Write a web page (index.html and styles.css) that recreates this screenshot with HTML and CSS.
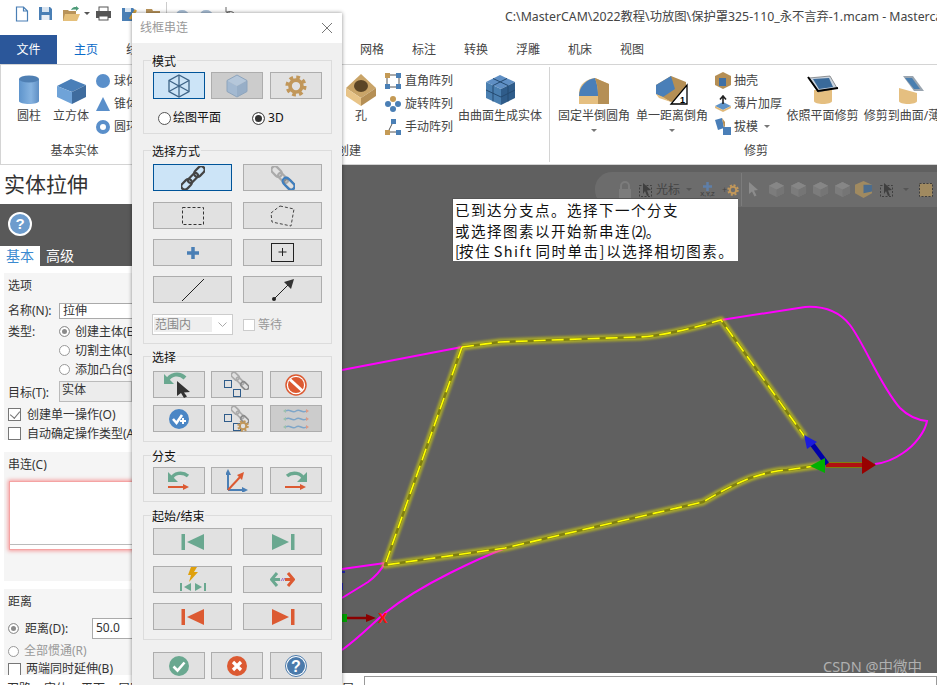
FILE: index.html
```html
<!DOCTYPE html>
<html lang="zh-CN">
<head>
    <meta charset="UTF-8">
    <title>实体拉伸 - Mastercam</title>
    <link rel="stylesheet" href="styles.css">
</head>
<body>
<svg class="defs">
    <symbol id="link-dark" viewBox="0 0 24 24"><g transform="rotate(-45 12 12)" fill="none" stroke="#444" stroke-width="2.2"><rect x="-3" y="8.5" width="12" height="7" rx="3.5"/><rect x="6" y="9.5" width="12" height="5" rx="2.5"/><rect x="15" y="8.5" width="12" height="7" rx="3.5"/></g></symbol>
    <symbol id="link-grey" viewBox="0 0 24 24"><g transform="rotate(45 12 12)" fill="none" stroke-width="2.2"><rect x="-3" y="8.5" width="12" height="7" rx="3.5" stroke="#aaa"/><rect x="6" y="9.5" width="12" height="5" rx="2.5" stroke="#aaa"/><rect x="15" y="8.5" width="12" height="7" rx="3.5" stroke="#8a8a8a"/></g></symbol>
    <symbol id="gear" viewBox="0 0 24 24"><circle cx="12" cy="12" r="6.5" fill="none" stroke="#c1975a" stroke-width="4"/><circle cx="12" cy="12" r="9.5" fill="none" stroke="#c1975a" stroke-width="4" stroke-dasharray="4 3.46"/></symbol>
    <symbol id="cube-dim" viewBox="0 0 18 18"><polygon points="9,1 17,5 17,13 9,17 1,13 1,5" fill="#7c7c7c"/><polygon points="9,9 17,5 17,13 9,17" fill="#757575"/><polygon points="9,1 17,5 9,9 1,5" fill="#868686"/></symbol>
    <symbol id="tri-end" viewBox="0 0 26 18"><rect x="21" y="1" width="3.5" height="16"/><polygon points="2,1 19,9 2,17"/></symbol>
    <symbol id="tri-start" viewBox="0 0 26 18"><rect x="1.5" y="1" width="3.5" height="16"/><polygon points="24,1 7,9 24,17"/></symbol>
</svg>

<div class="app">
    <div class="titlebar">
        <div class="qat">
            <svg class="qat-icon" width="14" height="16" viewBox="0 0 14 16"><path d="M1.5 1h7l4 4v10h-11z M8.5 1v4h4" fill="#fff" stroke="#4a7fb5" stroke-width="1.2"/></svg>
            <svg class="qat-icon" width="15" height="15" viewBox="0 0 15 15"><path d="M1 1h11l2 2v11H1z" fill="#4a7fb5"/><rect x="4" y="1" width="7" height="5" fill="#d8e4f0"/><rect x="3.5" y="9" width="8" height="5" fill="#e8eef5"/></svg>
            <svg class="qat-icon" width="18" height="16" viewBox="0 0 18 16"><path d="M1 4h5l1 1h7v10H1z" fill="#b8935a"/><path d="M3 8h15l-3 7H1z" fill="#e5c07b"/><path d="M9 4c1-2.500 3-3 5-3V0l3 2.500L14 5V3.500c-2 0-3 0-5 .5z" fill="#4c9a78"/></svg>
            <span class="qat-caret"></span>
            <svg class="qat-icon" width="17" height="15" viewBox="0 0 17 15"><rect x="4" y="1" width="9" height="5" fill="#fff" stroke="#555"/><rect x="1" y="5" width="15" height="7" fill="#555"/><rect x="4" y="10" width="9" height="4" fill="#fff" stroke="#555"/></svg>
            <svg class="qat-icon" width="16" height="16" viewBox="0 0 16 16"><path d="M1 2h11l2 2v11H1z" fill="#4a7fb5"/><rect x="4" y="2" width="6" height="4" fill="#d8e4f0"/><path d="M9 13l6-9" stroke="#d9a43c" stroke-width="2.500"/></svg>
            <svg class="qat-icon" width="14" height="14" viewBox="0 0 14 14"><path d="M0 2h6l1 2h7v10H0z" fill="#b8935a"/></svg>
            <i class="qat-sep"></i>
            <svg class="qat-icon" width="15" height="14" viewBox="0 0 15 14"><path d="M2 9C3 3 11 3 13 9" fill="none" stroke="#a9bfd6" stroke-width="3"/></svg>
            <svg class="qat-icon" width="15" height="14" viewBox="0 0 15 14"><path d="M2 9C3 3 11 3 13 9" fill="none" stroke="#a9bfd6" stroke-width="3"/></svg>
            <svg class="qat-icon" width="15" height="14" viewBox="0 0 15 14"><path d="M2 9C3 3 11 3 13 9M3 0v5h4" fill="none" stroke="#666"/></svg>
            <i class="qat-dash"></i>
        </div>
        <div class="doc-title">C:\MasterCAM\2022教程\功放图\保护罩325-110_永不言弃-1.mcam - Mastercam 2022</div>
    </div>

    <div class="tabs">
        <div class="tab-file">文件</div>
        <div class="tab active">主页</div>
        <div class="tab">线框</div>
        <div class="tab">曲面</div>
        <div class="tab">实体</div>
        <div class="tab tab-wide">模型准备</div>
        <div class="tab">网格</div>
        <div class="tab">标注</div>
        <div class="tab">转换</div>
        <div class="tab">浮雕</div>
        <div class="tab">机床</div>
        <div class="tab">视图</div>
    </div>

    <div class="ribbon">
        <div class="rgroup rgroup-basic">
            <div class="ritems">
                <div class="tool tool-cyl">
                    <svg width="22" height="30" viewBox="0 0 22 30"><defs><linearGradient id="cyl" x1="0" x2="1"><stop offset="0" stop-color="#5e94cc"/><stop offset=".6" stop-color="#86b3e0"/><stop offset="1" stop-color="#5f8fc4"/></linearGradient></defs><path d="M1 4v22c0 4 20 4 20 0V4z" fill="url(#cyl)"/><ellipse cx="11" cy="4" rx="10" ry="3.500" fill="#4f7fb3"/></svg>
                    <span>圆柱</span>
                </div>
                <div class="tool tool-cube">
                    <svg width="31" height="27" viewBox="0 0 31 27"><polygon points="15,1 30,7 16,14 1,8" fill="#4a7fb8"/><polygon points="1,8 16,14 16,26 1,19" fill="#6fa3d8"/><polygon points="16,14 30,7 30,19 16,26" fill="#3f6c9e"/></svg>
                    <span>立方体</span>
                </div>
                <div class="tool-list tool-list-basic">
                    <div class="tool-row"><svg width="14" height="14" viewBox="0 0 14 14"><circle cx="7" cy="7" r="7" fill="#5a8fca"/></svg><span>球体</span></div>
                    <div class="tool-row"><svg width="14" height="14" viewBox="0 0 14 14"><polygon points="7,0 14,14 0,14" fill="#5a8fca"/></svg><span>锥体</span></div>
                    <div class="tool-row"><svg width="14" height="14" viewBox="0 0 14 14"><circle cx="7" cy="7" r="5" fill="none" stroke="#5a8fca" stroke-width="4"/></svg><span>圆环</span></div>
                </div>
            </div>
            <div class="rlabel">基本实体</div>
        </div>

        <div class="rgroup rgroup-create">
            <div class="ritems">
                <div class="tool tool-hole">
                    <svg width="30" height="32" viewBox="0 0 30 32"><polygon points="15,0 30,14 15,24 0,14" fill="#c9a468"/><polygon points="0,14 15,24 15,32 0,22" fill="#e8c488"/><polygon points="30,14 15,24 15,32 30,22" fill="#b58f55"/><ellipse cx="15" cy="12" rx="7" ry="6" fill="#5b4526"/></svg>
                    <span>孔</span>
                </div>
                <div class="tool-list tool-list-array">
                    <div class="tool-row"><svg width="16" height="16" viewBox="0 0 16 16"><rect x="2" y="2" width="12" height="12" fill="none" stroke="#555"/><rect width="5" height="5" fill="#c49a55"/><rect x="11" width="5" height="5" fill="#4a7fb5"/><rect y="11" width="5" height="5" fill="#4a7fb5"/><rect x="11" y="11" width="5" height="5" fill="#4a7fb5"/></svg><span>直角阵列</span></div>
                    <div class="tool-row"><svg width="16" height="16" viewBox="0 0 16 16"><circle cx="8" cy="3" r="3" fill="#c49a55"/><circle cx="13" cy="8" r="3" fill="#4a7fb5"/><circle cx="8" cy="13" r="3" fill="#4a7fb5"/><circle cx="3" cy="8" r="3" fill="#4a7fb5"/></svg><span>旋转阵列</span></div>
                    <div class="tool-row"><svg width="16" height="16" viewBox="0 0 16 16"><path d="M3 13L8 3" stroke="#555"/><path d="M3 13h10" stroke="#555"/><rect x="6" width="5" height="5" fill="#4a7fb5"/><rect y="11" width="5" height="5" fill="#c49a55"/><rect x="11" y="11" width="5" height="5" fill="#4a7fb5"/></svg><span>手动阵列</span></div>
                </div>
                <div class="tool tool-sfsolid">
                    <svg width="31" height="30" viewBox="0 0 31 30"><polygon points="15,0 30,7 16,14 1,7" fill="#5f8fc4"/><polygon points="1,7 16,14 16,30 1,23" fill="#4a7fb0"/><polygon points="16,14 30,7 30,23 16,30" fill="#2f5c8a"/><path d="M8 3.500L23 10.500M22 3.500L8 10.500M8 10.500v16M1 15l15 7 14-7M23 10.500v16" stroke="#244a70" fill="none"/></svg>
                    <span>由曲面生成实体</span>
                </div>
            </div>
            <div class="rlabel">创建</div>
        </div>

        <div class="rgroup rgroup-trim">
            <div class="ritems">
                <div class="tool tool-fillet">
                    <svg width="32" height="28" viewBox="0 0 32 28"><path d="M1 17c0-9 8-14 16-15l14 6v20H1z" fill="#e5bf80"/><path d="M1 20c0-10 8-17 16-18 2 6 3 10 3 18z" fill="#4a7fb8"/><path d="M17 2l14 6v20H20V20c0-8-1-12-3-18z" fill="#b58f55"/></svg>
                    <span>固定半倒圆角</span>
                    <i class="caret"></i>
                </div>
                <div class="tool tool-fillet">
                    <svg width="34" height="30" viewBox="0 0 34 30"><polygon points="1,10 16,1 31,7 31,22 16,27 1,19" fill="#b58f55"/><polygon points="1,10 16,1 20,14 8,22 1,19" fill="#4a7fb8"/><polygon points="1,19 8,22 16,27 4,23" fill="#e5bf80"/><polygon points="32,10 32,29 16,29" fill="#fff" stroke="#000" stroke-width="1.300"/><text x="25" y="27.500" class="icon-num">1</text></svg>
                    <span>单一距离倒角</span>
                    <i class="caret"></i>
                </div>
                <div class="tool-list tool-list-trim">
                    <div class="tool-row"><svg width="16" height="17" viewBox="0 0 16 17"><polygon points="8,0 16,4 16,13 8,17 0,13 0,4" fill="#b58f55"/><rect x="4" y="6" width="7" height="8" fill="#3f70a5"/></svg><span>抽壳</span></div>
                    <div class="tool-row"><svg width="16" height="17" viewBox="0 0 16 17"><polygon points="8,7 16,11 8,15 0,11" fill="#5f94c9"/><polygon points="0,11 8,15 16,11 16,13 8,17 0,13" fill="#e0b878"/><path d="M8 9V2M5 4.500L8 1l3 3.500" stroke="#222" stroke-width="1.600" fill="none"/></svg><span>薄片加厚</span></div>
                    <div class="tool-row"><svg width="16" height="17" viewBox="0 0 16 17"><polygon points="0,2 7,0 9,10 3,12" fill="#4a7fb8"/><polygon points="7,0 10,4 10,8 9,10" fill="#b58f55"/><rect x="8" y="9" width="8" height="8" fill="#4a7fb8"/></svg><span>拔模</span><i class="caret caret-inline"></i></div>
                </div>
                <div class="tool tool-plane">
                    <svg width="34" height="30" viewBox="0 0 34 30"><path d="M8 15h18v11c0 4-18 4-18 0z" fill="#e5bf80"/><polygon points="3,3 24,1 31,13 12,17" fill="#c9d3de" stroke="#555" stroke-width=".6"/><polygon points="7,4 23,3 27,12 13,14" fill="#3a6a9a"/><path d="M2 2l10 14 20-3" stroke="#000" stroke-width="2" fill="none"/></svg>
                    <span>依照平面修剪</span>
                </div>
                <div class="tool tool-surf">
                    <svg width="34" height="30" viewBox="0 0 34 30"><path d="M8 13l18 5v8c0 4-18 4-18 0z" fill="#e5bf80"/><polygon points="12,1 22,1 33,16 23,16" fill="#9aa5b0"/><polygon points="14,3 21,3 29,14 23,14" fill="#4a7fb0"/></svg>
                    <span>修剪到曲面/薄片</span>
                </div>
            </div>
            <div class="rlabel">修剪</div>
        </div>
    </div>

    <div class="main">
        <div class="panel">
            <div class="panel-title">实体拉伸</div>
            <div class="panel-bar">
                <div class="help-circle">?</div>
                <div class="panel-tabs">
                    <span class="panel-tab on">基本</span>
                    <span class="panel-tab">高级</span>
                </div>
            </div>

            <div class="section section-options">
                <div class="sec-head">选项</div>
                <div class="field field-name"><label>名称(N):</label><div class="textbox">拉伸</div></div>
                <div class="field field-radio field-radio-first"><label>类型:</label><span class="radio on-grey"></span><span>创建主体(E)</span></div>
                <div class="field field-radio"><label></label><span class="radio"></span><span>切割主体(U)</span></div>
                <div class="field field-radio"><label></label><span class="radio"></span><span>添加凸台(S)</span></div>
                <div class="field field-target"><label>目标(T):</label><div class="readonly">实体</div></div>
                <div class="check-row check-row-first"><span class="check checked"></span><span>创建单一操作(O)</span></div>
                <div class="check-row"><span class="check"></span><span>自动确定操作类型(A)</span></div>
            </div>

            <div class="section section-chain">
                <div class="sec-head">串连(C)</div>
                <div class="chain-box"><div class="chain-list"></div></div>
            </div>

            <div class="section section-dist">
                <div class="sec-head">距离</div>
                <div class="dist-row"><span class="radio on-grey"></span><span class="dist-label">距离(D):</span><div class="textbox dist-input">50.0</div></div>
                <div class="dist-row2 muted"><span class="radio"></span><span>全部惯通(R)</span></div>
                <div class="check-row check-row-tight"><span class="check"></span><span>两端同时延伸(B)</span></div>
            </div>
        </div>

        <div class="canvas">
            <svg class="scene" viewBox="132 165 805 508" width="805" height="508">
                <defs><filter id="glow" x="-10%" y="-10%" width="120%" height="120%"><feGaussianBlur stdDeviation="1"/></filter></defs>
                <g fill="none" stroke="#ff00ff" stroke-width="2">
                    <path d="M342 370L462 347"/>
                    <path d="M721 320L805 307C822 306 838 310 850 325C865 345 880 385 900 408C908 416 918 420 927 421C925 432 915 445 903 453C893 460 884 463 875 464"/>
                    <path d="M342 569L385 563"/>
                    <path d="M385 563C380 572 375 577 368 582L342 598"/>
                    <path d="M342 650C360 637 372 624 385 613C405 597 428 584 450 573C470 563 490 554 506 548"/>
                </g>
                <path d="M462 347L500 342L580 339L640 337C660 336 690 329 721 320L805 437M462 347L385 565L505 548L560 535L703 502C720 492 735 484 750 478C765 473 780 470 787 470L822 465" fill="none" stroke="#e0e000" stroke-opacity=".55" stroke-width="7" stroke-linejoin="round" filter="url(#glow)"/>
                <path d="M462 347L500 342L580 339L640 337C660 336 690 329 721 320L805 437M462 347L385 565L505 548L560 535L703 502C720 492 735 484 750 478C765 473 780 470 787 470L822 465" fill="none" stroke="#7f7f10" stroke-width="2.500" stroke-linejoin="round"/>
                <path d="M462 347L500 342L580 339L640 337C660 336 690 329 721 320L805 437M462 347L385 565L505 548L560 535L703 502C720 492 735 484 750 478C765 473 780 470 787 470L822 465" fill="none" stroke="#ffff00" stroke-width="1.600" stroke-dasharray="12 6"/>

                <rect x="826" y="462" width="38" height="6" fill="#7f7f10"/>
                <rect x="826" y="463" width="38" height="4" fill="#b01010"/>
                <polygon points="862,456 876,465 862,474" fill="#980000"/>
                <path d="M827 464L812 444" stroke="#0000a8" stroke-width="5"/>
                <polygon points="804,435 817,442 807,449" fill="#1c1cdc"/>
                <polygon points="810,466 825,458 825,473" fill="#00b000"/>

                <path d="M343 618H368" stroke="#8a0000" stroke-width="2.500"/>
                <polygon points="366,614 376,618 366,622" fill="#8a0000"/>
                <rect x="342" y="614" width="5" height="8" fill="#00a000"/>
                <path d="M342 572h3M342 583v7" stroke="#1010c0" stroke-width="1.500"/>
                <text x="378" y="623" class="axis-x">X</text>
            </svg>

            <div class="cad-bar">
                <svg width="14" height="17" viewBox="0 0 14 17"><path d="M3 8V5a4 4 0 0 1 8 0v3" fill="none" stroke="#7c7c7c" stroke-width="2"/><rect x="1" y="8" width="12" height="9" fill="#7c7c7c"/></svg>
                <svg class="bar-mq" width="14" height="16" viewBox="0 0 14 16"><rect x=".5" y="3.500" width="12" height="11" fill="none" stroke="#3f3f3f" stroke-dasharray="2 1.500"/><path d="M4 1l8 7-4 .5 2 5-2 .5-2-5-2 3z" fill="#3f3f3f"/></svg>
                <span class="bar-text">光标</span>
                <i class="caret caret-dim"></i>
                <div class="bar-xyz">
                    <svg width="9" height="9" viewBox="0 0 9 9"><path d="M4.500 0v9M0 4.500h9" stroke="#5f7fa8" stroke-width="2.500"/></svg>
                    <span>X,Y,Z</span>
                </div>
                <div class="bar-gear">
                    <span>+</span>
                    <svg width="12" height="12" viewBox="0 0 24 24"><use href="#gear"/></svg>
                </div>
                <i class="bar-sep"></i>
                <svg class="bar-arrow" width="11" height="15" viewBox="0 0 11 15"><path d="M1 0l9 8-4 .5 2.500 5-2 1-2.500-5L1 12z" fill="#8c8c8c"/></svg>
                <svg class="bar-cube-first" width="17" height="17"><use href="#cube-dim"/></svg>
                <svg class="bar-cube" width="17" height="17"><use href="#cube-dim"/></svg>
                <svg class="bar-cube" width="17" height="17"><use href="#cube-dim"/></svg>
                <svg class="bar-cube" width="17" height="17"><use href="#cube-dim"/></svg>
                <svg class="bar-color" width="17" height="19" viewBox="0 0 18 18"><polygon points="9,0 18,4 18,13 9,18 0,13 0,4" fill="#a08a60"/><polygon points="9,4 18,4 18,11 9,13" fill="#4d6d8d"/></svg>
                <svg class="bar-mq2" width="14" height="16" viewBox="0 0 14 16"><rect x=".5" y="3.500" width="12" height="11" fill="none" stroke="#3f3f3f" stroke-dasharray="2 1.500"/><path d="M4 1l8 7-4 .5 2 5-2 .5-2-5-2 3z" fill="#3f3f3f"/></svg>
                <i class="caret caret-dim caret-dim2"></i>
                <svg class="bar-end" width="14" height="14" viewBox="0 0 14 14"><rect x=".5" y=".5" width="13" height="13" fill="#a08a60" stroke="#3f3f3f" stroke-dasharray="2 1.500"/></svg>
            </div>

            <div class="prompt">已到达分支点。选择下一个分支<br>或选择图素以开始新串连<span class="tight">(2)</span>。<br><span class="tight">[</span>按住 Shift 同时单击<span class="tight">]</span> 以选择相切图素。</div>
            <div class="watermark">CSDN @中微中</div>
        </div>
    </div>

    <div class="statusbar">
        <div class="manager-tabs">
            <span>刀路</span><span>实体</span><span>平面</span><span>层别</span>
        </div>
        <div class="status-label">层别:</div>
        <div class="status-input"></div>
    </div>
</div>

<div class="dialog">
    <div class="dialog-head">
        <span>线框串连</span>
        <svg width="12" height="12" viewBox="0 0 12 12"><path d="M1 1l10 10M11 1L1 11" stroke="#777" stroke-width="1"/></svg>
    </div>
    <div class="dialog-body">
        <fieldset class="group group-mode">
            <legend>模式</legend>
            <div class="grid3">
                <button class="btn on"><svg width="22" height="24" viewBox="0 0 22 24"><g fill="none" stroke="#3e6487" stroke-width="1.300"><polygon points="11,1 21,6.500 21,17.500 11,23 1,17.500 1,6.500"/><path d="M1 6.500L11 12L21 6.500M11 1V23M1 17.500L11 12L21 17.500"/></g></svg></button>
                <button class="btn off"><svg width="22" height="24" viewBox="0 0 22 24"><polygon points="11,1 21,6.500 11,12 1,6.500" fill="#b5c7da"/><polygon points="1,6.500 11,12 11,23 1,17.500" fill="#a3b9d1"/><polygon points="21,6.500 11,12 11,23 21,17.500" fill="#97aec7"/><polygon points="11,1 21,6.500 21,17.500 11,23 1,17.500 1,6.500" fill="none" stroke="#8ea5bd"/></svg></button>
                <button class="btn"><svg width="22" height="22"><use href="#gear"/></svg></button>
            </div>
            <div class="mode-radios">
                <span class="dlg-radio"></span><span>绘图平面</span>
                <span class="dlg-radio picked radio-3d"></span><span>3D</span>
            </div>
        </fieldset>

        <fieldset class="group group-method">
            <legend>选择方式</legend>
            <div class="grid2">
                <button class="btn on"><svg width="24" height="24"><use href="#link-dark"/></svg></button>
                <button class="btn"><svg width="24" height="24" viewBox="0 0 24 24"><use href="#link-grey" width="24" height="24"/><g transform="rotate(45 12 12)" fill="none" stroke="#3f7fbf" stroke-width="2.200"><rect x="13" y="8.500" width="14" height="7" rx="3.500"/></g></svg></button>
                <button class="btn"><svg width="24" height="20" viewBox="0 0 24 20"><rect x="1.500" y="1.500" width="21" height="17" fill="none" stroke="#333" stroke-dasharray="3 2"/></svg></button>
                <button class="btn"><svg width="25" height="22" viewBox="0 0 25 22"><polygon points="10,1 24,4 21,21 2,17 1,8" fill="none" stroke="#444" stroke-dasharray="3 2"/></svg></button>
                <button class="btn"><svg width="14" height="14" viewBox="0 0 14 14"><path d="M7 1v12M1 7h12" stroke="#4a7fb5" stroke-width="3.500"/></svg></button>
                <button class="btn"><svg width="23" height="19" viewBox="0 0 23 19"><rect x=".5" y=".5" width="22" height="18" fill="none" stroke="#222"/><path d="M11.500 5v8M7.500 9h8" stroke="#222"/></svg></button>
                <button class="btn"><svg width="24" height="24" viewBox="0 0 24 24"><path d="M1 23L23 1" stroke="#222"/></svg></button>
                <button class="btn"><svg width="24" height="24" viewBox="0 0 24 24"><circle cx="3" cy="21" r="2" fill="#222"/><path d="M3 21L19 5" stroke="#222"/><polygon points="23,1 20,11 13,4" fill="#333"/></svg></button>
            </div>
            <div class="range-row">
                <div class="combo"><span class="combo-text">范围内</span><svg width="9" height="5" viewBox="0 0 9 5"><path d="M.5.5l4 4 4-4" fill="none" stroke="#aaa"/></svg></div>
                <span class="wait-box"></span><span class="muted">等待</span>
            </div>
        </fieldset>

        <fieldset class="group group-select">
            <legend>选择</legend>
            <div class="grid3">
                <button class="btn"><svg width="30" height="26" viewBox="0 0 30 26"><path d="M3 9C6 2 15 0 21 6" fill="none" stroke="#6aa890" stroke-width="4"/><polygon points="0,2 0,12 10,12" fill="#6aa890"/><path d="M13 9l13 11-6 .5 3 4-3 1.500-3-5-4 3z" fill="#333"/></svg></button>
                <button class="btn"><svg width="26" height="26" viewBox="0 0 26 26"><use href="#link-grey" x="7" y="0" width="18" height="18"/><rect x=".5" y="8.500" width="7" height="7" fill="none" stroke="#2f5c8a"/><rect x="9.500" y="17.500" width="7" height="7" fill="none" stroke="#2f5c8a"/></svg></button>
                <button class="btn"><svg width="22" height="22" viewBox="0 0 22 22"><circle cx="11" cy="11" r="10" fill="#fff" stroke="#dc5a32" stroke-width="1.500"/><circle cx="11" cy="11" r="8" fill="#dc5a32"/><path d="M5 5.500L17 16.500" stroke="#fff" stroke-width="3"/></svg></button>
                <button class="btn"><svg width="20" height="20" viewBox="0 0 20 20"><circle cx="10" cy="10" r="10" fill="#4a86c5"/><path d="M4 10l3.500 4L13 6" fill="none" stroke="#fff" stroke-width="2.600"/><path d="M14 9v6M11 12h6" stroke="#fff" stroke-width="2"/></svg></button>
                <button class="btn"><svg width="26" height="26" viewBox="0 0 26 26"><use href="#link-grey" x="7" y="0" width="18" height="18"/><rect x=".5" y="8.500" width="7" height="7" fill="none" stroke="#2f5c8a"/><rect x="9.500" y="17.500" width="7" height="7" fill="none" stroke="#2f5c8a"/><use href="#gear" x="13" y="14" width="12" height="12"/></svg></button>
                <button class="btn off"><svg width="26" height="22" viewBox="0 0 26 22"><g fill="none" stroke="#7fa6c8" stroke-width="1.400"><path d="M3 3c4-3 6 3 10 0s6 3 10 0"/><path d="M3 11c4-3 6 3 10 0s6 3 10 0"/><path d="M3 19c4-3 6 3 10 0s6 3 10 0"/></g><path d="M0 3l3-2v4zM0 11l3-2v4zM0 19l3-2v4z" fill="#9cc0ad"/><path d="M26 3l-3-2v4zM26 11l-3-2v4zM26 19l-3-2v4z" fill="#dd9c88"/></svg></button>
            </div>
        </fieldset>

        <fieldset class="group group-branch">
            <legend>分支</legend>
            <div class="grid3">
                <button class="btn"><svg width="22" height="20" viewBox="0 0 22 20"><path d="M3 8C6 2 14 0 20 5" fill="none" stroke="#6aa890" stroke-width="3.500"/><polygon points="0,1 0,11 10,11" fill="#6aa890"/><path d="M0 16h16" stroke="#dc5a32" stroke-width="2"/><polygon points="15,13 21,16 15,19" fill="#dc5a32"/></svg></button>
                <button class="btn"><svg width="22" height="23" viewBox="0 0 22 23"><path d="M2 21V4M2 21h17" stroke="#4a7fb5" stroke-width="2"/><polygon points="2,0 5,6 -1,6" fill="#4a7fb5"/><polygon points="22,21 16,18 16,24" fill="#4a7fb5"/><path d="M2 21L15 7" stroke="#dc5a32" stroke-width="2"/><polygon points="18,3 16,11 11,6" fill="#dc5a32"/></svg></button>
                <button class="btn"><svg width="22" height="20" viewBox="0 0 22 20"><path d="M19 8C16 2 8 0 2 5" fill="none" stroke="#6aa890" stroke-width="3.500"/><polygon points="22,1 22,11 12,11" fill="#6aa890"/><path d="M0 16h16" stroke="#dc5a32" stroke-width="2"/><polygon points="15,13 21,16 15,19" fill="#dc5a32"/></svg></button>
            </div>
        </fieldset>

        <fieldset class="group group-ends">
            <legend>起始/结束</legend>
            <div class="grid2 grid2-ends">
                <button class="btn ico-green"><svg width="26" height="18"><use href="#tri-start"/></svg></button>
                <button class="btn ico-green"><svg width="26" height="18"><use href="#tri-end"/></svg></button>
                <button class="btn"><svg width="26" height="26" viewBox="0 0 26 26"><polygon points="11,0 17,0 14,5 18,5 9,15 11,8 8,8" fill="#dfa00c"/><g fill="#6aa890"><rect y="16" width="2" height="8"/><polygon points="11,16 4,20 11,24"/><rect x="24" y="16" width="2" height="8"/><polygon points="15,16 22,20 15,24"/></g></svg></button>
                <button class="btn"><svg width="25" height="15" viewBox="0 0 25 15"><path d="M7 1L1.500 7.500L7 14M2 7.500h8" fill="none" stroke="#6aa890" stroke-width="3"/><path d="M18 1l5.500 6.500L18 14M15 7.500h8" fill="none" stroke="#dc5a32" stroke-width="3"/><path d="M11 9l2-3M13 9l2-3" stroke="#9a6cc8"/></svg></button>
                <button class="btn ico-red"><svg width="26" height="18"><use href="#tri-start"/></svg></button>
                <button class="btn ico-red"><svg width="26" height="18"><use href="#tri-end"/></svg></button>
            </div>
        </fieldset>

        <div class="grid3 dialog-actions">
            <button class="btn"><svg width="20" height="20" viewBox="0 0 20 20"><circle cx="10" cy="10" r="10" fill="#6aa890"/><path d="M4.500 10.500l4 4 7-8" fill="none" stroke="#fff" stroke-width="2.600"/></svg></button>
            <button class="btn"><svg width="20" height="20" viewBox="0 0 20 20"><circle cx="10" cy="10" r="10" fill="#dc5a32"/><path d="M6 6l8 8M14 6l-8 8" stroke="#fff" stroke-width="3.200"/></svg></button>
            <button class="btn"><svg width="22" height="22" viewBox="0 0 22 22"><circle cx="11" cy="11" r="10.500" fill="#fff" stroke="#4a7aab"/><circle cx="11" cy="11" r="9" fill="#4a7aab"/><text x="11" y="16.500" class="icon-help">?</text></svg></button>
        </div>
    </div>
</div>
</body>
</html>
```

FILE: styles.css
```css
* { box-sizing: border-box; }
html, body { margin: 0; padding: 0; }
body { width: 937px; height: 685px; overflow: hidden; background: #fff; color: #333; font-family: "Noto Sans", "Noto Sans CJK SC", sans-serif; font-size: 12px; line-height: 16px; }
svg { display: block; flex-shrink: 0; }
.defs { display: none; }
.app { width: 937px; height: 685px; display: flex; flex-direction: column; overflow: hidden; }

/* title bar */
.titlebar { height: 35px; display: flex; align-items: center; flex-shrink: 0; white-space: nowrap; overflow: hidden; }
.qat { width: 505px; flex-shrink: 0; display: flex; align-items: center; padding: 0 0 8px 15px; }
.qat-icon { margin-right: 9px; }
.qat-caret { width: 0; height: 0; border: 3px solid transparent; border-top: 3px solid #555; border-bottom: 0; margin: 0 5px 0 -5px; }
.qat-sep { width: 1px; height: 24px; background: #ccc; margin: 0 8px 0 -3px; }
.qat-dash { width: 6px; height: 1px; background: #555; }
.doc-title { font-size: 12.300px; color: #444; padding-bottom: 1px; align-self: flex-start; margin-top: 9px; }

/* ribbon tabs */
.tabs { height: 29px; display: flex; align-items: center; flex-shrink: 0; }
.tab-file { width: 57px; height: 29px; background: #2b579a; color: #fff; display: flex; align-items: center; justify-content: center; margin-right: 17px; }
.tab { width: 24px; margin-right: 28px; flex-shrink: 0; color: #444; white-space: nowrap; }
.tab.active { color: #0a6ac8; }
.tab-wide { width: 50px; margin-right: 28px; }

/* ribbon */
.ribbon { height: 101px; flex-shrink: 0; display: flex; border-top: 1px solid #d4d4d4; border-bottom: 1px solid #d4d4d4; overflow: hidden; white-space: nowrap; color: #444; }
.rgroup { display: flex; flex-direction: column; flex-shrink: 0; }
.rgroup-basic { width: 148px; border-left: 1px solid #d4d4d4; }
.rgroup-create { width: 402px; position: relative; }
.rgroup-create::after { content: ""; position: absolute; right: 0; top: 2px; bottom: 2px; width: 1px; background: #d4d4d4; }
.rgroup-trim { width: 412px; }
.ritems { height: 74px; display: flex; }
.rlabel { text-align: center; line-height: 24px; }
.tool { height: 74px; display: flex; flex-direction: column; align-items: center; justify-content: flex-start; flex-shrink: 0; padding-top: 8px; }
.tool svg { height: 34px; }
.tool span { margin-top: 1px; }
.tool-cyl { width: 42px; margin-left: 7px; }
.tool-cube { width: 42px; }
.tool-cube svg { margin-top: 3px; height: 31px; }
.tool-list { padding-top: 4px; display: flex; flex-direction: column; flex-shrink: 0; }
.tool-row { height: 23px; display: flex; align-items: center; }
.tool-list-basic { margin-left: 4px; }
.tool-list-basic svg { margin-right: 4px; }
.tool-list-array svg { margin-right: 4px; }
.tool-list-trim svg { margin-right: 3px; }
.rgroup-create .ritems { justify-content: flex-end; padding-right: 8px; }
.tool-hole { width: 30px; margin-right: 9px; }
.tool-list-array { width: 66px; margin-right: 7px; }
.tool-sfsolid { width: 84px; }
.rgroup-trim .ritems { padding-left: 7px; }
.tool-fillet { width: 74px; margin-right: 4px; }
.tool-list-trim { width: 67px; margin: 0 5px 0 2px; }
.tool-plane { width: 71px; margin-right: 4px; }
.tool-surf { width: 92px; }
.caret { display: block; width: 0; height: 0; border: 3px solid transparent; border-top: 3px solid #777; border-bottom: 0; margin-top: 5px; }
.caret-inline { margin: 0 0 0 6px; }
.icon-num { font-family: "Liberation Sans", sans-serif; font-size: 9px; font-weight: bold; fill: #000; }
.icon-help { font-family: "Liberation Sans", sans-serif; font-size: 16px; font-weight: bold; fill: #fff; text-anchor: middle; }

/* left manager panel */
.main { height: 510px; display: flex; flex-shrink: 0; overflow: hidden; }
.panel { width: 132px; flex-shrink: 0; overflow: hidden; white-space: nowrap; }
.panel-title { height: 39px; font-size: 21px; line-height: 38px; padding-left: 4px; color: #333; }
.panel-bar { height: 62px; background: #595959; display: flex; flex-direction: column; }
.help-circle { width: 24px; height: 24px; margin: 8px 0 0 8px; border-radius: 50%; background: #6d9ccd; border: 2px solid #fff; color: #fff; font: bold 15px/20px "Liberation Sans", sans-serif; text-align: center; }
.panel-tabs { margin-top: 10px; display: flex; }
.panel-tab { height: 20px; width: 34px; font-size: 14px; line-height: 20px; color: #fff; }
.panel-tab.on { background: #fff; color: #3b8ad0; width: 40px; margin-right: 6px; padding-left: 6px; }
.section { margin-left: 4px; padding: 4px 0 0 4px; background: #f5f5f5; overflow: hidden; }
.section-options { height: 167px; margin-top: 7px; }
.section-chain { height: 129px; margin-top: 12px; }
.section-dist { height: 86px; margin-top: 8px; }
.sec-head { height: 16px; padding-top: 1px; }
.field { display: flex; align-items: center; }
.field label { width: 51px; flex-shrink: 0; }
.field-name { height: 16px; margin-top: 10px; }
.field-radio { height: 19px; }
.field-radio-first { margin-top: 3px; }
.field-target { height: 21px; margin-top: 2px; }
.field-target label { padding-top: 3px; }
.textbox { flex: 1; height: 100%; min-width: 90px; background: #fff; border: 1px solid #aaa; padding-left: 3px; line-height: 14px; }
.readonly { width: 90px; height: 21px; background: #ececec; border: 1px solid #bbb; padding-left: 2px; line-height: 16px; }
.radio { width: 11px; height: 11px; border-radius: 50%; border: 1px solid #999; background: #fff; margin-right: 5px; flex-shrink: 0; display: block; }
.radio.on-grey { background: #8a8a8a; box-shadow: inset 0 0 0 2px #fff; }
.check-row { height: 19px; display: flex; align-items: center; }
.check-row-first { margin-top: 3px; }
.check { width: 13px; height: 13px; border: 1px solid #777; background: #fff; margin-right: 6px; flex-shrink: 0; position: relative; }
.check.checked::after { content: ""; position: absolute; left: 3px; top: 0; width: 5px; height: 8px; border: solid #777; border-width: 0 1.500px 1.500px 0; transform: rotate(40deg); }
.chain-box { width: 130px; height: 69px; margin: 9px 0 0 1px; border: 1px solid #f5a3a3; box-shadow: 0 0 4px 1px #f59a9a; background: #fff; }
.chain-list { height: 63px; border-bottom: 1px solid #bbb; }
.dist-row { height: 21px; margin-top: 9px; display: flex; align-items: center; }
.dist-row .radio { margin-right: 6px; }
.dist-label { width: 67px; flex-shrink: 0; }
.dist-input { flex: none; width: 60px; height: 21px; font-size: 12px; padding-top: 2px; }
.dist-row2 { height: 16px; margin-top: 4px; display: flex; align-items: center; }
.check-row-tight { margin-top: 2px; height: 16px; }
.check-row-tight .check { margin-right: 5px; }
.muted { color: #999; }

/* graphics view */
.canvas { width: 805px; height: 508px; background: #606060; flex-shrink: 0; position: relative; overflow: hidden; }
.scene { position: absolute; left: 0; top: 0; }
.axis-x { font: bold 14px "Liberation Sans", sans-serif; fill: #ff1010; }
.cad-bar { position: absolute; left: 463px; top: 7px; right: 0; height: 35px; background: #6c6c6c; border-radius: 17px 0 0 17px; display: flex; align-items: center; padding-left: 23px; color: #444; white-space: nowrap; }
.bar-mq { margin-left: 7px; }
.bar-text { margin-left: 3px; width: 24px; flex-shrink: 0; }
.caret-dim { border-top-color: #555; margin: 0 0 0 6px; }
.bar-xyz { margin-left: 7px; width: 17px; display: flex; flex-direction: column; align-items: center; font: bold 6px/7px "Liberation Sans", sans-serif; color: #444; }
.bar-gear { margin-left: 6px; width: 16px; display: flex; align-items: flex-end; font-size: 9px; line-height: 12px; }
.bar-sep { width: 1px; height: 33px; margin-left: 3px; background: #7c7c7c; }
.bar-arrow { margin-left: 6px; }
.bar-cube-first { margin-left: 9px; }
.bar-cube { margin-left: 5px; }
.bar-color { margin-left: 4px; }
.bar-mq2 { margin-left: 8px; }
.caret-dim2 { margin-left: 9px; }
.bar-end { margin-left: 10px; }
.prompt { position: absolute; left: 320px; top: 33px; width: 286px; height: 63px; background: #fff; border: 1px solid #555; border-bottom: 0; border-right: 0; padding: 1px 0 0 2px; color: #111; font-family: "Noto Sans CJK SC", sans-serif; font-size: 14.500px; line-height: 20.500px; letter-spacing: 1.500px; word-spacing: -2px; white-space: nowrap; overflow: hidden; }
.tight { letter-spacing: -1px; }
.watermark { position: absolute; left: 691px; top: 493px; font-size: 14.500px; color: #b0b0b0; white-space: nowrap; }

/* bottom strip */
.statusbar { height: 10px; flex-shrink: 0; display: flex; overflow: hidden; }
.manager-tabs { width: 342px; flex-shrink: 0; display: flex; padding: 6px 0 0 7px; gap: 13px; line-height: 16px; }
.manager-tabs span { width: 24px; }
.status-label { width: 22px; flex-shrink: 0; padding-top: 6px; }
.status-input { flex: 1; height: 20px; margin-top: 1px; border: 1px solid #999; }

/* wireframe chaining dialog */
.dialog { position: absolute; left: 132px; top: 13px; width: 210px; height: 672px; background: #f0f0f0; box-shadow: 0 0 4px rgba(0,0,0,.45); color: #111; }
.dialog-head { height: 30px; background: #fff; display: flex; align-items: center; justify-content: space-between; padding: 0 9px 1px 8px; color: #999; }
.dialog-body { padding: 0 0 0 11px; }
.group { width: 189px; margin: 0; padding: 0 0 0 9px; border: 1px solid #dcdcdc; min-width: 0; display: block; }
.group legend { padding: 0 1px; margin-left: -2px; line-height: 19px; height: 16px; }
.group-mode { height: 82px; margin-top: 9px; padding-top: 3px; }
.group-method { height: 202px; margin-top: 8px; padding-top: 5px; }
.group-select { height: 94px; margin-top: 4px; padding-top: 6px; }
.group-branch { height: 55px; margin-top: 5px; padding-top: 3px; }
.group-ends { height: 133px; margin-top: 5px; padding-top: 4px; }
.grid3 { display: grid; grid-template-columns: 58px 59px 52px; padding-top: 1px; row-gap: 7px; }
.grid3 .btn { width: 52px; }
.grid2 { display: grid; grid-template-columns: 79px 79px; column-gap: 11px; grid-template-rows: 28px 27px 27px 27px; row-gap: 10px; padding-top: 1px; }
.grid2-ends { grid-template-rows: 28px 27px 27px; }
.btn { height: 27px; padding: 0; margin: 0; border: 1px solid #adadad; background: #e1e1e1; display: flex; align-items: center; justify-content: center; }
.btn.on { background: #cce4f7; border-color: #005499; }
.btn.off { background: #cccccc; }
.ico-green { color: #6aa890; }
.ico-red { color: #dc5a32; }
.ico-green svg, .ico-red svg { fill: currentColor; }
.mode-radios { display: flex; align-items: center; height: 20px; margin: 9px 0 0 5px; color: #111; }
.dlg-radio { width: 13px; height: 13px; border-radius: 50%; border: 1px solid #555; background: #fff; margin-right: 2px; flex-shrink: 0; }
.dlg-radio.picked { background: #333; box-shadow: inset 0 0 0 2px #fff; }
.radio-3d { margin: 0 3px 0 31px; }
.range-row { display: flex; align-items: center; margin-top: 11px; }
.combo { width: 81px; height: 21px; margin-left: -1px; background: #fff; border: 1px solid #ccc; display: flex; align-items: center; justify-content: space-between; padding: 1px 5px 1px 1px; color: #888; }
.combo-text { width: 58px; height: 15px; background: #eee; padding-left: 1px; line-height: 15px; }
.wait-box { width: 12px; height: 12px; margin: 0 3px 0 10px; background: #fff; border: 1px solid #ccc; }
.dialog-actions { margin-left: 10px; margin-top: 12px; padding-top: 0; }
```
